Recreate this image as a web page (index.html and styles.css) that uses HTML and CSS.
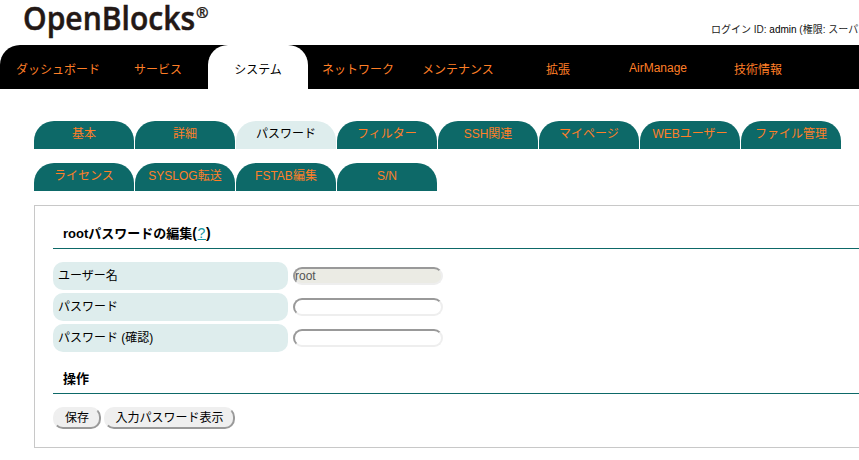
FILE: index.html
```html
<!DOCTYPE html>
<html lang="ja">
<head>
<meta charset="utf-8">
<title>OpenBlocks</title>
<link rel="stylesheet" href="styles.css">
</head>
<body>
<header class="header">
  <svg class="logo" width="200" height="45" role="img" aria-label="OpenBlocks">
    <text x="0" y="30" textLength="172" lengthAdjust="spacingAndGlyphs" class="logo-name">OpenBlocks</text>
    <text x="173" y="17.5" class="logo-mark">®</text>
  </svg>
  <div class="login">ログイン ID: <span class="user">admin</span> (権限: スーパ</div>
</header>
<nav class="nav">
  <a>ダッシュボード</a><a>サービス</a><a class="active">システム</a><a>ネットワーク</a><a>メンテナンス</a><a>拡張</a><a class="latin">AirManage</a><a>技術情報</a>
</nav>
<nav class="tabs">
  <a>基本</a><a>詳細</a><a class="active">パスワード</a><a>フィルター</a><a>SSH関連</a><a>マイページ</a><a>WEBユーザー</a><a>ファイル管理</a>
  <a>ライセンス</a><a>SYSLOG転送</a><a>FSTAB編集</a><a>S/N</a>
</nav>
<main class="panel">
  <h2>rootパスワードの編集<span class="paren">(<a class="help" href="#">?</a>)</span></h2>
  <form class="form">
    <label for="user">ユーザー名</label><input id="user" type="text" value="root" disabled>
    <label for="pass">パスワード</label><input id="pass" type="password">
    <label for="confirm">パスワード (確認)</label><input id="confirm" type="password">
  </form>
  <h2 class="actions-title">操作</h2>
  <div class="actions"><button class="save">保存</button><button class="show">入力パスワード表示</button></div>
</main>
</body>
</html>
```
FILE: styles.css
```css
* { box-sizing: border-box; }
body {
  margin: 0;
  overflow: hidden;
  background: #fff;
  color: #000;
  font: 12px/18px "Liberation Sans", "Noto Sans CJK JP", sans-serif;
}
.header {
  display: flex;
  height: 45px;
}
.logo { margin-left: 23px; flex: none; }
.logo-name {
  font: 600 32px "Open Sans", sans-serif;
  fill: #231815;
  stroke: #231815;
  stroke-width: .5px;
}
.logo-mark {
  font: 600 15px "Open Sans", sans-serif;
  fill: #231815;
  stroke: #231815;
  stroke-width: .3px;
}
.login {
  margin: 21px 0 0 488px;
  flex: none;
  font-size: 10px;
  white-space: nowrap;
  color: #222;
}
.user { color: #000; }
.nav {
  display: flex;
  height: 44px;
  padding-left: 8px;
  background: #000;
  border-radius: 20px 0 0 0;
}
.nav a {
  width: 100px;
  padding-top: 16px;
  text-align: center;
  color: #ff7f27;
  white-space: nowrap;
}
.nav .latin { padding-top: 14px; }
.nav .active {
  background: #fff;
  color: #000;
  border-radius: 20px 20px 0 0;
}
.tabs {
  display: grid;
  grid-template-columns: repeat(8, 100px);
  gap: 14px 1px;
  margin: 32px 0 14px 34px;
}
.tabs a {
  height: 28px;
  padding-top: 4px;
  text-align: center;
  white-space: nowrap;
  background: #0d6968;
  color: #ff7f27;
  border-radius: 20px 20px 0 0;
}
.tabs .active { background: #deeded; color: #000; }
.panel {
  height: 243px;
  margin-left: 34px;
  padding: 18px 0 18px 18px;
  border: 1px solid #c8c8c8;
  border-right: 0;
}
h2 {
  height: 25px;
  margin: 0;
  padding-left: 10px;
  border-bottom: 1px solid #0d6968;
  font-size: 13px;
  line-height: 19px;
}
.paren { font-size: 14px; letter-spacing: .6px; }
.help { color: #1596a0; font-weight: normal; text-decoration-thickness: 1px; }
.form {
  display: grid;
  grid-template-columns: 235px 150px;
  gap: 3px 5px;
  align-items: center;
  margin-top: 13px;
}
.form label {
  height: 28px;
  padding: 5px;
  background: #deeded;
  border-radius: 10px;
}
.form input {
  width: 150px;
  height: 18px;
  padding: 0;
  border: 2px solid;
  border-color: #999 #eee #eee #999;
  border-radius: 10px;
  font: 12px "Liberation Sans", sans-serif;
  background: #fff;
}
.form input:disabled { background: #ebebe4; color: #545454; }
.actions-title { margin-top: 17px; }
.actions { display: flex; gap: 3px; margin-top: 13px; }
.actions button {
  height: 22px;
  padding: 0;
  border: 2px solid;
  border-color: #efefef #999 #999 #efefef;
  border-radius: 10px;
  background: #efefef;
  color: #000;
  font: 12px/16px "Liberation Sans", "Noto Sans CJK JP", sans-serif;
  white-space: nowrap;
}
.save { width: 48px; }
.show { width: 131px; }
```
